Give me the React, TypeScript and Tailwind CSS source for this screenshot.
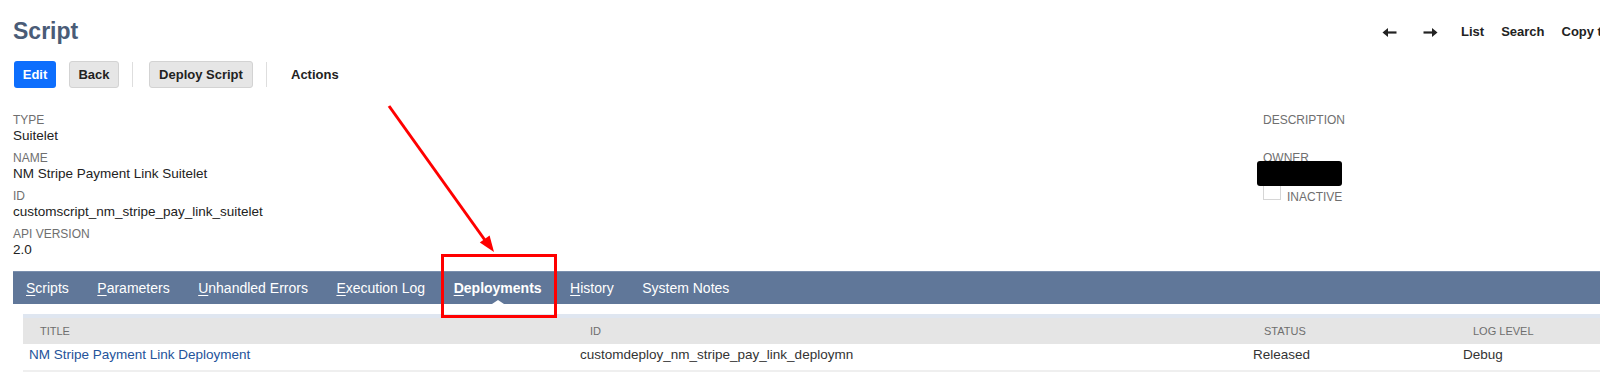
import React from 'react'

const tabs = [
  { key: 'S', rest: 'cripts' },
  { key: 'P', rest: 'arameters' },
  { key: 'U', rest: 'nhandled Errors' },
  { key: 'E', rest: 'xecution Log' },
  { key: 'D', rest: 'eployments', active: true },
  { key: 'H', rest: 'istory' },
  { key: '', rest: 'System Notes' },
]

const fields = [
  { label: 'TYPE', value: 'Suitelet' },
  { label: 'NAME', value: 'NM Stripe Payment Link Suitelet' },
  { label: 'ID', value: 'customscript_nm_stripe_pay_link_suitelet' },
  { label: 'API VERSION', value: '2.0' },
]

function Arrow({ dir }: { dir: 'left' | 'right' }) {
  return (
    <svg width="15" height="11" viewBox="0 0 15 11" className={dir === 'right' ? 'rotate-180' : ''}>
      <path d="M2 5.5H14.5" stroke="#222" strokeWidth="2.2" />
      <path d="M0.5 5.5L6 1V10Z" fill="#222" />
    </svg>
  )
}

function Field({ label, value }: { label: string; value?: string }) {
  return (
    <div>
      <div className="text-[12px] leading-[12px] text-[#6f6f6f]">{label}</div>
      <div className="mt-[2px] h-[16px] text-[13.5px] leading-[16px] text-[#222]">{value}</div>
    </div>
  )
}

export default function App() {
  return (
    <div className="relative h-[389px] w-[1600px] overflow-hidden bg-white font-['Liberation_Sans',Arial,sans-serif]">
      {/* Header */}
      <div className="flex items-start pt-[17px] pl-[13px]">
        <h1 className="w-[1369px] shrink-0 text-[23px] font-bold leading-[28px] text-[#4a5c77]">Script</h1>
        <div className="mt-[7px] flex shrink-0 items-center whitespace-nowrap text-[13px] font-bold leading-[16px] text-[#222]">
          <Arrow dir="left" />
          <span className="ml-[26px] flex"><Arrow dir="right" /></span>
          <span className="ml-[23px]">List</span>
          <span className="ml-[17px]">Search</span>
          <span className="ml-[17px]">Copy to Account</span>
        </div>
      </div>

      {/* Buttons */}
      <div className="mt-[16px] flex items-center pl-[14px] text-[13px] font-bold">
        <button className="h-[27px] w-[42px] rounded-[3px] bg-[#0d6efd] text-white">Edit</button>
        <button className="ml-[13px] h-[27px] w-[50px] rounded-[3px] border border-[#d3d3d3] bg-[#e6e6e6] text-[#222]">Back</button>
        <div className="ml-[13px] h-[25px] w-px bg-[#dedede]" />
        <button className="ml-[16px] h-[27px] w-[104px] rounded-[3px] border border-[#d3d3d3] bg-[#e6e6e6] text-[#222]">Deploy Script</button>
        <div className="ml-[13px] h-[25px] w-px bg-[#dedede]" />
        <span className="ml-[24px] text-[#222]">Actions</span>
      </div>

      {/* Fields */}
      <div className="mt-[26px] flex">
        <div className="flex w-[1263px] flex-col gap-[8px] pl-[13px]">
          {fields.map((f) => (
            <Field key={f.label} label={f.label} value={f.value} />
          ))}
        </div>
        <div className="relative flex flex-col gap-[8px]">
          <Field label="DESCRIPTION" />
          <div>
            <div className="text-[12px] leading-[12px] text-[#6f6f6f]">OWNER</div>
            <div className="h-[18px]" />
            <div className="flex items-end">
              <span className="h-[18px] w-[18px] border border-[#d6d6d6] bg-white" />
              <span className="mb-[-4px] ml-[6px] text-[12px] leading-[14px] text-[#6f6f6f]">INACTIVE</span>
            </div>
          </div>
          <div className="absolute top-[47px] left-[-6px] h-[25px] w-[85px] rounded-[3px] bg-black" />
        </div>
      </div>

      {/* Tabs */}
      <div className="mt-[13px] ml-[13px] flex h-[33px] items-center gap-[28.5px] border-t border-[#7a8fae] bg-[#607799] pl-[13px] text-[14px] text-white">
        {tabs.map((t) => (
          <div key={t.rest} className={`relative flex h-full items-center ${t.active ? 'font-bold' : ''}`}>
            <span>
              {t.key && <u className="underline-offset-2">{t.key}</u>}
              {t.rest}
            </span>
            {t.active && (
              <span className="absolute bottom-0 left-1/2 h-0 w-0 -translate-x-1/2 border-x-[6px] border-b-[4px] border-x-transparent border-b-white" />
            )}
          </div>
        ))}
      </div>

      {/* Table */}
      <div className="mt-[10px] ml-[23px]">
        <div className="h-[4px] bg-[#dfe6f0]" />
        <div className="grid h-[26px] grid-cols-[551px_673px_210px_1fr] items-center bg-[#e5e5e5] text-[11px] text-[#6e6e6e]">
          <span className="pl-[17px]">TITLE</span>
          <span className="pl-[16px]">ID</span>
          <span className="pl-[17px]">STATUS</span>
          <span className="pl-[16px]">LOG LEVEL</span>
        </div>
        <div className="grid h-[28px] grid-cols-[551px_673px_210px_1fr] items-center border-b-2 border-[#efefef] pb-[4px] text-[13.5px] text-[#333]">
          <span className="pl-[6px] text-[#24539a]">NM Stripe Payment Link Deployment</span>
          <span className="pl-[6px]">customdeploy_nm_stripe_pay_link_deploymn</span>
          <span className="pl-[6px]">Released</span>
          <span className="pl-[6px]">Debug</span>
        </div>
      </div>

      {/* Annotation */}
      <svg className="pointer-events-none absolute top-0 left-0" width="1600" height="389">
        <line x1="389" y1="106" x2="487" y2="243" stroke="#ff0000" strokeWidth="3" />
        <path d="M494 252L479.8 242.5L489.6 235.5Z" fill="#ff0000" />
      </svg>
      <div className="pointer-events-none absolute top-[254px] left-[441px] h-[64px] w-[116px] border-[3px] border-[#ff0000]" />
    </div>
  )
}
